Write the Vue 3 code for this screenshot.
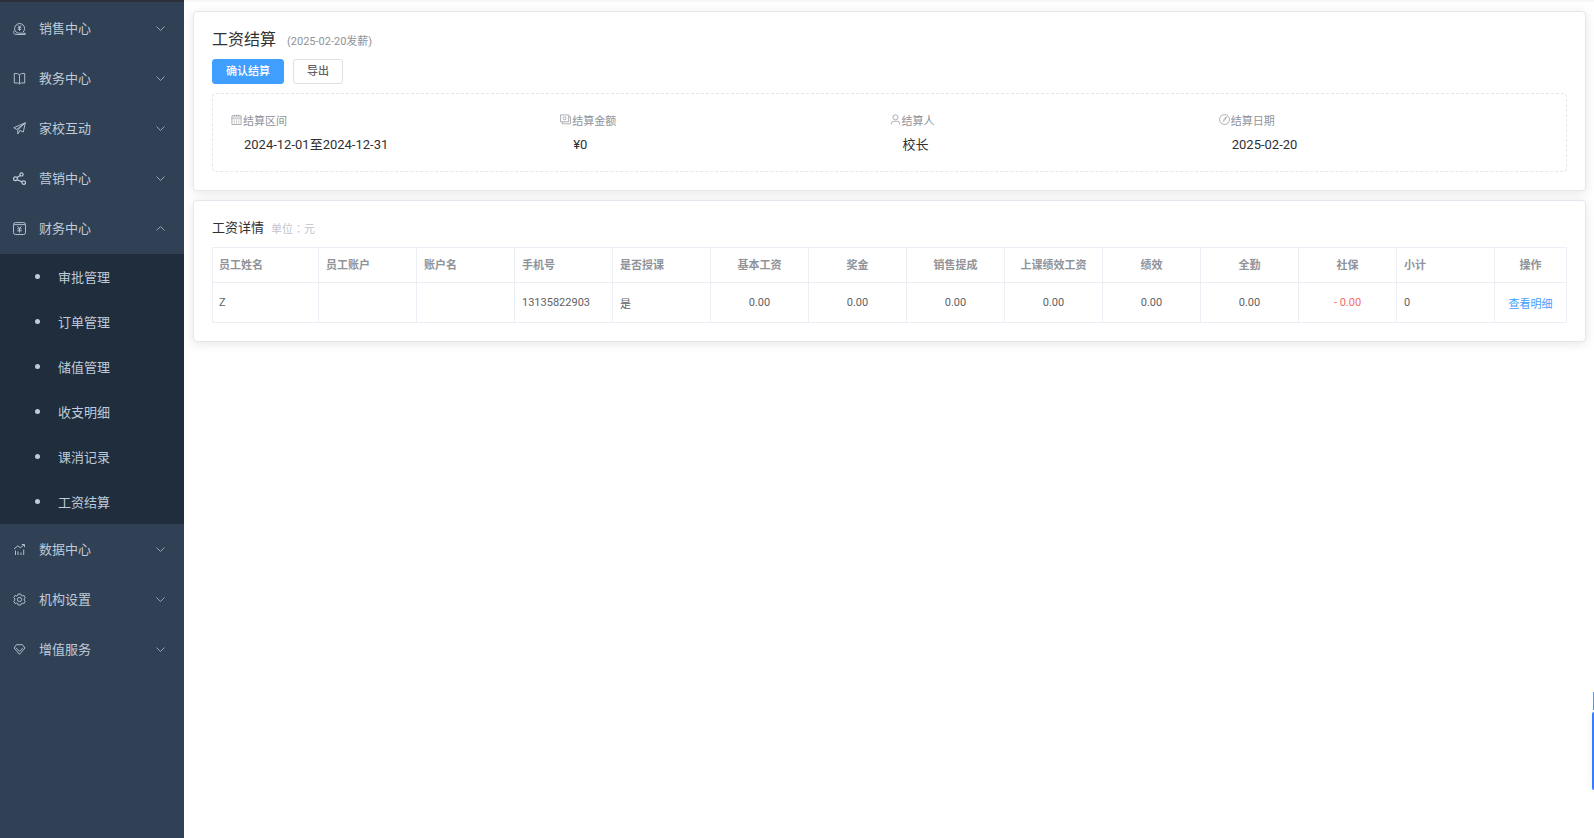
<script setup>
import { ref } from 'vue'

const topMenus = [
  { name: '销售中心', icon: 'sales' },
  { name: '教务中心', icon: 'book' },
  { name: '家校互动', icon: 'plane' },
  { name: '营销中心', icon: 'share' },
  { name: '财务中心', icon: 'finance' },
]
const bottomMenus = [
  { name: '数据中心', icon: 'chart' },
  { name: '机构设置', icon: 'gear' },
  { name: '增值服务', icon: 'gem' },
]
const subMenus = ['审批管理', '订单管理', '储值管理', '收支明细', '课消记录', '工资结算']
const financeOpen = ref(true)

function toggle(item) {
  if (item.icon === 'finance') financeOpen.value = !financeOpen.value
}

const icons = {
  sales: 'M10.200 10A5 5 0 1 0 3 10M3 10a5.200 5.200 0 0 0 3.600 1.200h5.600v1.300H3.500M1.200 8.500c-.8 1.500-.6 3 .6 3.800h2M4.800 3.200l1.700 2 1.700-2M6.500 5.200v3.600M4.800 5.700h3.400M4.800 7.300h3.400',
  book: 'M6.500 3v8.500M6.500 3C5.700 1.700 4 1.300 1.300 1.500v9.500c2.400-.2 4.200-.1 5.200 1 1-1.100 2.800-1.200 5.200-1V1.500C9 1.300 7.300 1.700 6.500 3z',
  plane: 'M12.300.8L.8 5.700l3 1.700L12.300.8zM12.300.8L10.300 10 6.300 8.300M12.300.8L4.800 7.800v4.100l1.900-2.700',
  share: 'M7.300 3.500L4 5.600M4.400 7.700l4.500 2.200',
  finance: 'M2.500.6h8a2 2 0 0 1 2 2v7.900a2 2 0 0 1-2 2h-8a2 2 0 0 1-2-2V2.600a2 2 0 0 1 2-2zM1 2.600h11M4.500 4.200l2 2.200 2-2.200M6.500 6.400v4.200M4.300 6.900h4.400M4.300 8.800h4.400',
  chart: 'M2.500 7.500V12M5 8.500V12M8 9.500V12M10.700 6.500V12M1 6l3.500-3 3 1.700L11 1.800M8.800 1.500h2.700v2.600',
  gear: 'M5.200 1h2.600l.5 1.500 1 .5 1.600-.6 1.300 2.200-1 1.300v1.200l1 1.300-1.300 2.200-1.600-.6-1 .5-.5 1.500H5.200l-.5-1.500-1-.5-1.600.6L.8 8.400l1-1.300V5.900l-1-1.300 1.300-2.200 1.600.6 1-.5zM8.600 6.500a2.100 2.100 0 1 1-4.200 0 2.100 2.100 0 0 1 4.200 0z',
  gem: 'M3.500 1.700h6l2.500 3.300-5.500 6.300L1 5zM3 4.800l3.500 3.600L10 4.800',
}

const summary = [
  { label: '结算区间', value: '2024-12-01至2024-12-31', icon: 'M1 2h10v9.500H1zM1 4.500h10M3.500.8v2M6 .8v2M8.500.8v2M3 6.500h1M5.500 6.500h1M8 6.500h1M3 8.200h1M5.500 8.200h1M8 8.200h1M3 9.900h1M5.500 9.900h1M8 9.900h1' },
  { label: '结算金额', value: '¥0', icon: 'M.6 1h8.900v7.500H.6zM2.500 8.500v2.200h9V3h-2M6.700 4.700a1.600 1.600 0 1 1-3.200 0 1.600 1.600 0 0 1 3.200 0z' },
  { label: '结算人', value: '校长', icon: 'M8.800 3.600a2.800 2.800 0 1 1-5.600 0 2.800 2.800 0 0 1 5.600 0zM1.500 11.500V10.500a2.500 2.500 0 0 1 2.500-2.500h4a2.500 2.500 0 0 1 2.500 2.500v1' },
  { label: '结算日期', value: '2025-02-20', icon: 'M11.400 6A5.400 5.400 0 1 1 .6 6a5.400 5.400 0 0 1 10.800 0zM8.300 3L5.300 6l.8.800zM5.500 6.500L4.500 8.500' },
]

const columns = [
  { title: '员工姓名', value: 'Z', cls: 'first' },
  { title: '员工账户', value: '' },
  { title: '账户名', value: '' },
  { title: '手机号', value: '13135822903' },
  { title: '是否授课', value: '是' },
  { title: '基本工资', value: '0.00', cls: 'center' },
  { title: '奖金', value: '0.00', cls: 'center' },
  { title: '销售提成', value: '0.00', cls: 'center' },
  { title: '上课绩效工资', value: '0.00', cls: 'center' },
  { title: '绩效', value: '0.00', cls: 'center' },
  { title: '全勤', value: '0.00', cls: 'center' },
  { title: '社保', value: '- 0.00', cls: 'center minus' },
  { title: '小计', value: '0' },
  { title: '操作', value: '查看明细', cls: 'center last', link: true },
]
</script>

<template>
  <div class="layout">
    <aside class="sidebar">
      <nav>
        <ul class="menu menu-top">
          <li v-for="item in topMenus" :key="item.name">
            <button class="menu-item" type="button" @click="toggle(item)">
              <svg class="menu-icon" :class="item.icon" viewBox="0 0 13 13" aria-hidden="true">
                <path :d="icons[item.icon]" />
                <template v-if="item.icon === 'share'">
                  <circle cx="8.500" cy="2.400" r="1.600" />
                  <circle cx="2.500" cy="6.700" r="1.900" />
                  <circle cx="10.700" cy="10.600" r="1.800" />
                </template>
              </svg>
              <span class="menu-name">{{ item.name }}</span>
              <svg class="chevron" viewBox="0 0 9 9" aria-hidden="true">
                <path :d="item.icon === 'finance' && financeOpen ? 'M.5 6.500l4-4 4 4' : 'M.5 2.500l4 4 4-4'" />
              </svg>
            </button>
          </li>
        </ul>
        <ul v-if="financeOpen" class="submenu">
          <li v-for="name in subMenus" :key="name">
            <a class="sub-item" href="#"><span class="dot"></span>{{ name }}</a>
          </li>
        </ul>
        <ul class="menu">
          <li v-for="item in bottomMenus" :key="item.name">
            <button class="menu-item" type="button">
              <svg class="menu-icon" viewBox="0 0 13 13" aria-hidden="true">
                <path :d="icons[item.icon]" />
              </svg>
              <span class="menu-name">{{ item.name }}</span>
              <svg class="chevron" viewBox="0 0 9 9" aria-hidden="true"><path d="M.5 2.500l4 4 4-4" /></svg>
            </button>
          </li>
        </ul>
      </nav>
    </aside>

    <main class="main">
      <section class="card">
        <div class="heading">
          <h1>工资结算</h1>
          <span class="pay-date">(2025-02-20发薪)</span>
        </div>
        <div class="actions">
          <button class="btn primary" type="button">确认结算</button>
          <button class="btn" type="button">导出</button>
        </div>
        <dl class="summary">
          <div v-for="s in summary" :key="s.label">
            <dt>
              <svg viewBox="0 0 12 12" aria-hidden="true"><path :d="s.icon" /></svg>{{ s.label }}
            </dt>
            <dd>{{ s.value }}</dd>
          </div>
        </dl>
      </section>

      <section class="card">
        <div class="detail-heading">
          <h2>工资详情</h2>
          <span class="unit">单位：元</span>
        </div>
        <table>
          <thead>
            <tr>
              <th v-for="c in columns" :key="c.title" :class="c.cls" scope="col">{{ c.title }}</th>
            </tr>
          </thead>
          <tbody>
            <tr>
              <td v-for="c in columns" :key="c.title" :class="c.cls">
                <a v-if="c.link" href="#">{{ c.value }}</a>
                <template v-else>{{ c.value }}</template>
              </td>
            </tr>
          </tbody>
        </table>
      </section>
    </main>

    <div class="float-tabs" aria-hidden="true">
      <div class="tab-small"></div>
      <div class="tab-large"></div>
    </div>
  </div>
</template>

<style>
body {
  margin: 0;
  background: #fff;
}
</style>

<style scoped>
.layout {
  display: flex;
  min-height: 100vh;
  font-family: Roboto, "Noto Sans CJK SC", sans-serif;
  font-size: 11px;
  color: #606266;
}
button {
  font-family: inherit;
  cursor: pointer;
}
a {
  text-decoration: none;
}
ul {
  margin: 0;
  padding: 0;
  list-style: none;
}
.sidebar {
  flex: 0 0 184px;
  box-sizing: border-box;
  border-top: 2px solid #2b2f3a;
  background: #304156;
}
.menu-top {
  padding: 1px 0;
}
.menu-item {
  display: flex;
  align-items: center;
  width: 100%;
  height: 50px;
  padding: 0 19px 0 13px;
  border: 0;
  background: none;
  color: #bfcbd9;
  font-size: 13px;
  text-align: left;
}
.menu-icon {
  width: 13px;
  height: 13px;
  margin-right: 13px;
  fill: none;
  stroke: #bfcbd9;
  stroke-width: 0.9;
}
.menu-icon.share {
  stroke-width: 1.2;
}
.menu-name {
  flex: 1;
  padding-bottom: 2px;
}
.chevron {
  width: 9px;
  height: 9px;
  fill: none;
  stroke: #97a4b4;
  stroke-width: 1;
}
.submenu {
  background: #1f2d3d;
}
.sub-item {
  display: flex;
  align-items: center;
  height: 45px;
  padding-left: 35px;
  color: #bfcbd9;
  font-size: 13px;
}
.dot {
  width: 5px;
  height: 5px;
  margin-right: 18px;
  border-radius: 50%;
  background: #bfcbd9;
}
.main {
  flex: 1;
  min-width: 0;
  display: flex;
  flex-direction: column;
  gap: 9px;
  padding: 9px 8px 9px 9px;
  border-top: 2px solid #f7f7f7;
}
.card {
  padding: 18px;
  border: 1px solid #e4e7ed;
  border-radius: 4px;
  background: #fff;
  box-shadow: 0 2px 11px rgba(0, 0, 0, 0.1);
}
.heading {
  display: flex;
  align-items: center;
  height: 20px;
  color: #909399;
}
h1,
h2 {
  margin: 0;
  font-weight: 400;
  color: #303133;
}
h1 {
  font-size: 16px;
  line-height: 20px;
}
.pay-date {
  margin-left: 11px;
}
.actions {
  display: flex;
  gap: 9px;
  margin: 9px 0;
}
.btn {
  height: 25px;
  padding: 0 13px;
  border: 1px solid #dcdfe6;
  border-radius: 3px;
  background: #fff;
  color: #606266;
  font-size: 11px;
  font-weight: 500;
  line-height: 11px;
}
.btn.primary {
  border-color: #409eff;
  background: #409eff;
  color: #fff;
}
.summary {
  display: grid;
  grid-template-columns: repeat(4, 1fr);
  margin: 0;
  padding: 18px 18px 17px;
  border: 1px dashed #e6e6e6;
  border-radius: 4px;
}
dt {
  display: flex;
  align-items: center;
  height: 16px;
  color: #909399;
}
dt svg {
  width: 11px;
  height: 11px;
  margin-right: 1px;
  margin-bottom: 1px;
  fill: none;
  stroke: #909399;
  stroke-width: 0.8;
}
dd {
  margin: 8px 0 0 13px;
  color: #303133;
  font-size: 13px;
  line-height: 18px;
}
.detail-heading {
  display: flex;
  align-items: center;
  height: 18px;
  margin-bottom: 10px;
}
h2 {
  font-size: 13px;
  line-height: 18px;
}
.unit {
  margin-left: 7px;
  color: #c0c4cc;
  font-family: "Noto Sans CJK TC", sans-serif;
}
table {
  width: 100%;
  table-layout: fixed;
  border-collapse: collapse;
}
th,
td {
  padding: 0 7px;
  border: 1px solid #ebeef5;
  text-align: left;
  white-space: nowrap;
}
th {
  height: 32px;
  padding-bottom: 2px;
  color: #909399;
  font-weight: 700;
}
td {
  height: 39px;
}
th.first {
  width: 92px;
}
th.last {
  width: 57px;
}
.first {
  padding-left: 6px;
}
.center {
  text-align: center;
}
td.minus {
  color: #f56c6c;
}
td a {
  color: #409eff;
}
.float-tabs {
  position: fixed;
  right: 0;
  bottom: 48px;
  display: flex;
  flex-direction: column;
  align-items: flex-end;
  gap: 2px;
}
.tab-small {
  width: 1px;
  height: 18px;
  background: #5b8ff0;
}
.tab-large {
  width: 2px;
  height: 78px;
  border-radius: 2px 0 0 2px;
  background: #3b7cff;
  box-shadow: 0 0 8px rgba(0, 0, 0, 0.15);
}
</style>
